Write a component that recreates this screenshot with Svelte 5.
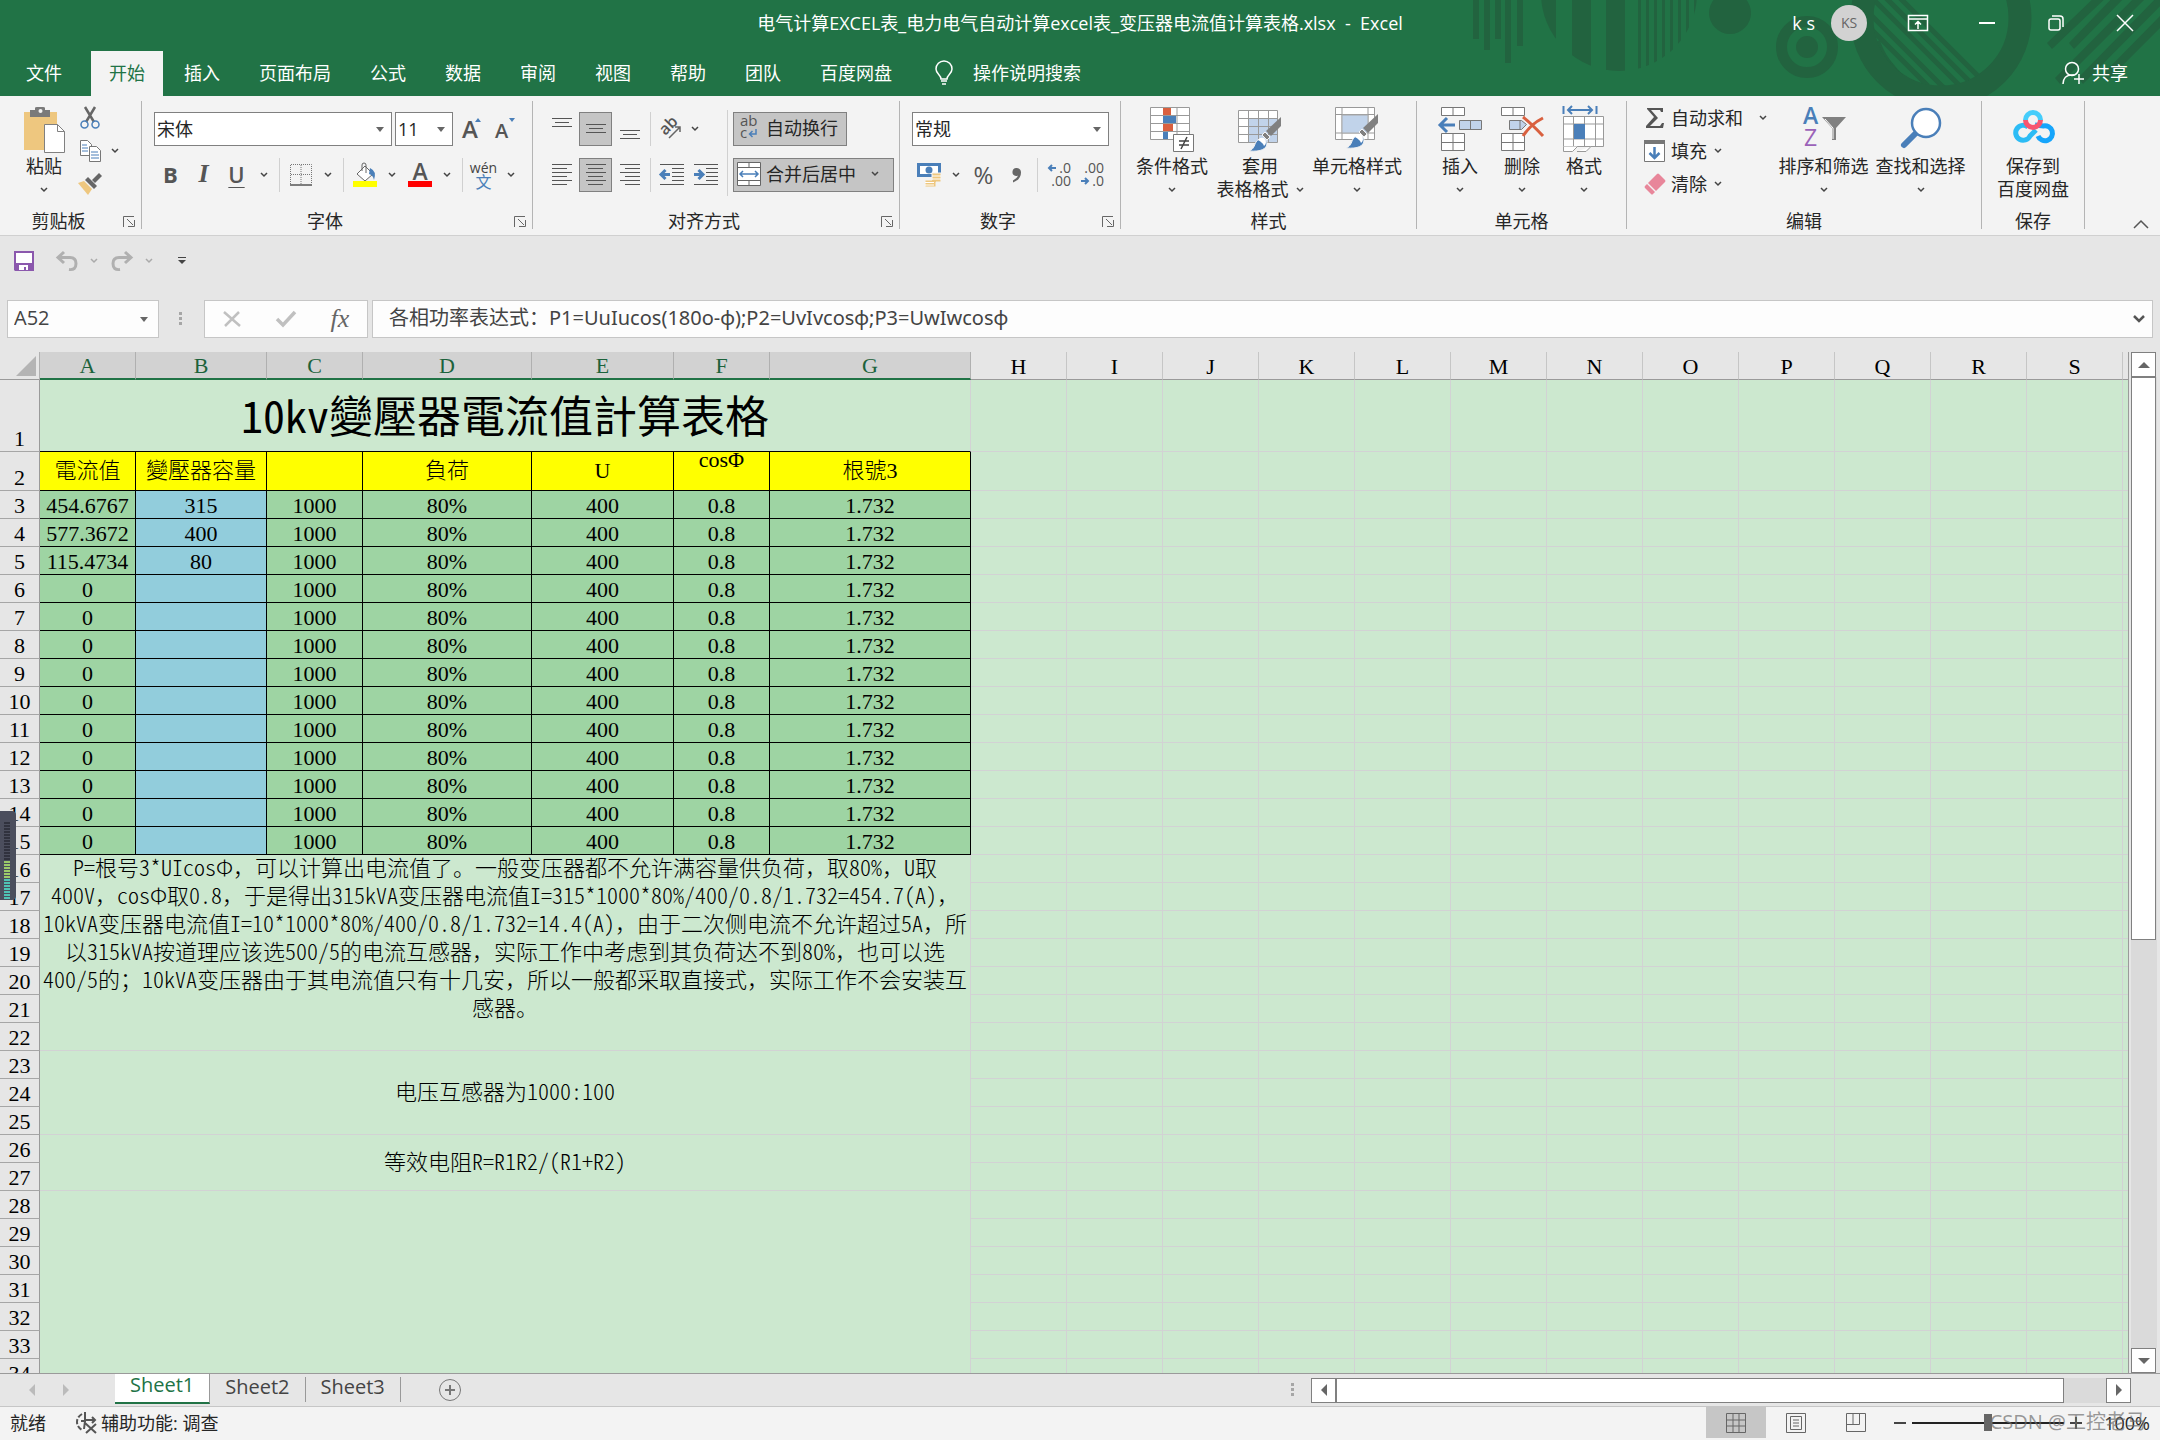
<script lang="ts">
	const tabs = ['插入', '页面布局', '公式', '数据', '审阅', '视图', '帮助', '团队', '百度网盘'];

	const dataColumns = [
		{ letter: 'A', width: 96 },
		{ letter: 'B', width: 131 },
		{ letter: 'C', width: 96 },
		{ letter: 'D', width: 169 },
		{ letter: 'E', width: 142 },
		{ letter: 'F', width: 96 },
		{ letter: 'G', width: 201 }
	];
	const emptyColumns = 'HIJKLMNOPQRST'.split('');

	const headings = ['電流值', '變壓器容量', '', '負荷', 'U', 'cosΦ', '根號3'];
	const results: Record<number, [string, string]> = {
		3: ['454.6767', '315'],
		4: ['577.3672', '400'],
		5: ['115.4734', '80']
	};
	const constants = ['1000', '80%', '400', '0.8', '1.732'];

	const noteLines = [
		'P=根号3*UIcosΦ，可以计算出电流值了。一般变压器都不允许满容量供负荷，取80%，U取',
		'400V，cosΦ取0.8，于是得出315kVA变压器电流值I=315*1000*80%/400/0.8/1.732=454.7(A)，',
		'10kVA变压器电流值I=10*1000*80%/400/0.8/1.732=14.4(A)，由于二次侧电流不允许超过5A，所',
		'以315kVA按道理应该选500/5的电流互感器，实际工作中考虑到其负荷达不到80%，也可以选',
		'400/5的；10kVA变压器由于其电流值只有十几安，所以一般都采取直接式，实际工作不会安装互',
		'感器。'
	];

	const rows = Array.from({ length: 34 }, (_, i) => i + 1);
	const meterBars = Array.from({ length: 26 }, (_, i) => i);

	let formula = $state('各相功率表达式：P1=UuIucos(180o-ф);P2=UvIvcosф;P3=UwIwcosф');
	let cellName = $state('A52');
	let zoom = $state(100);

	function rowCells(row: number) {
		return [...(results[row] ?? ['0', '']), ...constants];
	}

	// Latin runs are set half-width, everything else keeps the full width
	function runs(line: string) {
		return line.split(/([!-~]+)/).filter(Boolean);
	}
</script>

{#snippet chevron()}
	<svg class="chevron" width="8" height="6" viewBox="0 0 8 6"><path d="M1 1l3 3 3-3" /></svg>
{/snippet}

{#snippet triangle()}
	<svg class="triangle" width="8" height="5" viewBox="0 0 8 5"><path d="M0 0h8L4 5z" /></svg>
{/snippet}

{#snippet drop(label: string)}
	<button class="drop" aria-label={label}>{@render chevron()}</button>
{/snippet}

{#snippet launcher(label: string)}
	<button class="launcher" aria-label={label}>
		<svg width="12" height="11" viewBox="0 0 12 11" fill="none" stroke="#666">
			<path d="M.5 11V.5H11M4 3l6 6M5 10.500h6.500V4" />
		</svg>
	</button>
{/snippet}

{#snippet lines(widths: number[], align: string, top: number)}
	<svg width="20" height="22" viewBox="0 0 20 22" fill="#555">
		{#each widths as w, i}
			<rect
				x={align === 'left' ? 0 : align === 'right' ? 20 - w : Math.floor((20 - w) / 2)}
				y={top + i * 4}
				width={w}
				height="1"
			/>
		{/each}
	</svg>
{/snippet}

{#snippet brush()}
	<path d="M43 10v9L33 29l-5-5z" fill="#808080" />
	<path d="M27 25l5 5-3 3-5-5z" fill="#808080" stroke="#f3f3f3" />
	<path d="M11 44c5-2 5-5 7-9 3-5 11-4 11 1 0 6-6 9-18 8z" fill="#4a7fb9" stroke="#f3f3f3" />
	<path d="M20 33c3-4 8-2 8 2 0 2-1 3-2 4-1-3-3-4-6-6z" fill="#fff" />
{/snippet}

{#snippet note(line: string)}
	<p>
		{#each runs(line) as run}<span class:half={/^[!-~]/.test(run)}>{run}</span>{/each}
	</p>
{/snippet}

<div class="window">
	<header class="titlebar">
		<svg class="pattern" width="760" height="96" viewBox="0 0 760 96" fill="#22633f">
			<clipPath id="disc"><circle cx="219" cy="-7" r="78" /></clipPath>
			<clipPath id="ring"><circle cx="541" cy="18" r="68" /></clipPath>
			<path d="M73 0h6v39h-6zM84 0h6v50h-6zM95 0h6v39h-6zM105 0h6v63h-6zM117 0h6v46h-6z" />
			<path
				clip-path="url(#disc)"
				d="M140 0h16v75h-16zM172 0h19v75h-19zM206 0h19v75h-19zM238 0h3v75h-3zM246 0h3v75h-3zM254 0h3v75h-3zM262 0h3v75h-3zM270 0h3v75h-3zM278 0h3v75h-3zM286 0h3v75h-3zM294 0h3v75h-3z"
			/>
			<circle cx="330" cy="13" r="21" />
			<circle cx="407" cy="47" r="25.500" fill="none" stroke="#22633f" stroke-width="11" />
			<circle cx="407" cy="47" r="11" />
			<circle cx="541" cy="18" r="79" fill="none" stroke="#22633f" stroke-width="23" />
			<g clip-path="url(#ring)" stroke="#22633f" stroke-width="5">
				<path d="M456 0l90 90M470 -4l90 90M484 -4l90 90M498 -4l90 90M438 -4l90 90" />
				<path d="M475 42q12 32 40 48" stroke-width="10" />
			</g>
			<path d="M647 43l5 6L712-8h-12zM669 43l5 6L730-8h-12zM655 78l5 6L752-8h-12zM678 78l5 6L774-8h-12zM703 74l5 6 56-56V12z" />
		</svg>
		<div class="title-row">
			<h1>电气计算EXCEL表_电力电气自动计算excel表_变压器电流值计算表格.xlsx&nbsp; -&nbsp; Excel</h1>
			<div class="window-tools">
				<span>k s</span>
				<button class="avatar">KS</button>
				<button aria-label="功能区显示选项">
					<svg width="20" height="16" viewBox="0 0 20 16" fill="none" stroke="#fff">
						<path d="M.5.5h19v15H.5zM.5 4h19M10 14V7M7 9.500l3-3 3 3" stroke-width="1.500" />
					</svg>
				</button>
				<button aria-label="最小化">
					<svg width="16" height="16"><path d="M0 8h16" stroke="#fff" stroke-width="2" /></svg>
				</button>
				<button aria-label="还原">
					<svg width="16" height="16" viewBox="0 0 16 16" fill="none" stroke="#fff" stroke-width="1.500">
						<rect x="1" y="4" width="11" height="11" rx="2" />
						<path d="M4 1h8q3 0 3 3v8" />
					</svg>
				</button>
				<button aria-label="关闭">
					<svg width="16" height="16"><path d="M0 0l16 16M16 0L0 16" stroke="#fff" stroke-width="1.500" /></svg>
				</button>
			</div>
		</div>
		<nav class="tabs">
			<button class="file">文件</button>
			<button class="active">开始</button>
			{#each tabs as tab}
				<button>{tab}</button>
			{/each}
			<button class="tell-me">
				<svg width="18" height="24" viewBox="0 0 18 24" fill="none" stroke="#fff" stroke-width="1.500">
					<path d="M6 18c0-4-5-5-5-10a8 8 0 0 1 16 0c0 5-5 6-5 10zM6 20h6M7 23h4" />
				</svg>
				操作说明搜索
			</button>
			<button class="share">
				<svg width="22" height="24" viewBox="0 0 22 24" fill="none" stroke="#fff" stroke-width="1.500">
					<circle cx="10" cy="8" r="6.500" />
					<path d="M1 23c0-5 3-9 9-9h2M17 13v10M12 18h10" />
				</svg>
				共享
			</button>
		</nav>
	</header>

	<div class="ribbon">
		<section class="group clipboard">
			<div class="body">
				<button class="big paste">
					<svg width="44" height="46" viewBox="0 0 44 46">
						<path d="M2 5h33v38H2z" fill="#eec77f" />
						<path d="M8 3h5V1q0-1 2-1h6q2 0 2 1v2h5v7H8z" fill="#7a7a7a" />
						<circle cx="18.500" cy="4" r="2" fill="#f3f3f3" />
						<path d="M22.500 17.500h13l7 7v21h-20z" fill="#fff" stroke="#808080" />
						<path d="M35.500 17.500v7h7" fill="none" stroke="#808080" />
					</svg>
					<span>粘贴</span>
					<span>{@render chevron()}</span>
				</button>
				<div class="stack">
					<div>
						<button class="tool" aria-label="剪切">
							<svg width="20" height="22" viewBox="0 0 20 22" fill="none" stroke-width="1.500">
								<path d="M5 0l9 15M15 0L6 15" stroke="#666" stroke-width="2.500" />
								<circle cx="4.500" cy="17.500" r="3.500" stroke="#4a7fb9" />
								<circle cx="15.500" cy="17.500" r="3.500" stroke="#4a7fb9" />
							</svg>
						</button>
					</div>
					<div>
						<button class="tool" aria-label="复制">
							<svg width="21" height="22" viewBox="0 0 21 22" fill="#fff" stroke="#777">
								<path d="M.5.5h7l4 4v11H.5z" />
								<path d="M2 5h5M2 8h6M2 11h6" stroke="#4a7fb9" />
								<path d="M9.500 6.500h7l4 4v11h-11z" />
								<path d="M11 12h7M11 15h8M11 18h8" stroke="#4a7fb9" />
							</svg>
						</button>
						{@render drop('复制选项')}
					</div>
					<div>
						<button class="tool" aria-label="格式刷">
							<svg width="24" height="22" viewBox="0 0 24 22">
								<path d="M0 10l6-2 8 8-4 6z" fill="#eec77f" />
								<path d="M7 7l3-3 9 9-3 3z" fill="#666" />
								<path d="M14 7l7-7 3 3-7 7z" fill="#666" />
							</svg>
						</button>
					</div>
				</div>
			</div>
			<footer><h2>剪贴板</h2>{@render launcher('剪贴板设置')}</footer>
		</section>

		<section class="group font">
			<div class="body rows">
				<div class="row">
					<label class="combo family">
						<select aria-label="字体"><option>宋体</option></select>{@render triangle()}
					</label>
					<label class="combo size">
						<select aria-label="字号"><option>11</option></select>{@render triangle()}
					</label>
					<button class="tool" aria-label="增大字号">
						<svg width="22" height="24" viewBox="0 0 22 24">
							<text x="0" y="21" font-size="24" class="glyph">A</text><path d="M13 5h6l-3-4z" fill="#4a7fb9" />
						</svg>
					</button>
					<button class="tool" aria-label="减小字号">
						<svg width="22" height="24" viewBox="0 0 22 24">
							<text x="0" y="21" font-size="20" class="glyph">A</text><path d="M14 1h6l-3 4z" fill="#4a7fb9" />
						</svg>
					</button>
				</div>
				<div class="row">
					<button class="tool letter"><b>B</b></button>
					<button class="tool letter"><i>I</i></button>
					<button class="tool letter"><u>U</u></button>
					{@render drop('下划线选项')}
					<span class="sep"></span>
					<button class="tool" aria-label="边框">
						<svg width="22" height="22" viewBox="0 0 22 22" fill="none" stroke="#777">
							<path d="M.5 20V.5h21V20M11 1v19M1 10.500h20" stroke-dasharray="1 1" />
							<path d="M0 21h22" stroke="#555" stroke-width="1.500" />
						</svg>
					</button>
					{@render drop('边框选项')}
					<span class="sep"></span>
					<button class="tool" aria-label="填充颜色">
						<svg width="24" height="26" viewBox="0 0 24 26">
							<path d="M4 12l8-8 8 8-8 7z" fill="#fff" stroke="#666" />
							<path d="M9 9V3q0-2 2-2t2 2v8" fill="none" stroke="#666" />
							<path d="M17 6q7 3 4 12-1-5-5-6z" fill="#4a7fb9" />
							<path d="M0 19h24v6H0z" fill="#ff0" />
						</svg>
					</button>
					{@render drop('填充颜色选项')}
					<button class="tool" aria-label="字体颜色">
						<svg width="24" height="26" viewBox="0 0 24 26">
							<text x="12" y="18" font-size="23" text-anchor="middle" class="glyph">A</text>
							<path d="M0 19h24v6H0z" fill="#f00" />
						</svg>
					</button>
					{@render drop('字体颜色选项')}
					<span class="sep"></span>
					<button class="tool pinyin"><span>wén</span><span>文</span></button>
					{@render drop('拼音选项')}
				</div>
			</div>
			<footer><h2>字体</h2>{@render launcher('字体设置')}</footer>
		</section>

		<section class="group align">
			<div class="body">
				<div class="rows spaced">
					<div class="row">
						<button class="tool" aria-label="顶端对齐">{@render lines([20, 14, 20], 'center', 0)}</button>
						<button class="tool on" aria-label="垂直居中">{@render lines([20, 14, 20], 'center', 6)}</button>
						<button class="tool" aria-label="底端对齐">{@render lines([20, 14, 20], 'center', 12)}</button>
						<span class="sep"></span>
						<button class="tool" aria-label="方向">
							<svg width="24" height="24" viewBox="0 0 24 24">
								<text x="2" y="17" font-size="16" class="glyph" transform="rotate(-45 6 14)">ab</text>
								<path d="M9 21L20 10M20 15v-5h-5" fill="none" stroke="#666" stroke-width="1.500" />
							</svg>
						</button>
						<button class="drop tight" aria-label="方向选项">{@render chevron()}</button>
					</div>
					<div class="row">
						<button class="tool" aria-label="左对齐">{@render lines([20, 15, 20, 15, 20, 15], 'left', 0)}</button>
						<button class="tool on" aria-label="居中">{@render lines([20, 15, 20, 15, 20, 15], 'center', 0)}</button>
						<button class="tool" aria-label="右对齐">{@render lines([20, 15, 20, 15, 20, 15], 'right', 0)}</button>
						<span class="sep"></span>
						<button class="tool" aria-label="减少缩进量">
							<svg width="24" height="22" viewBox="0 0 24 22">
								<path d="M0 .5h24M12 4.500h12M12 8.500h12M12 12.500h12M12 16.500h12M0 20.500h24" stroke="#555" />
								<path d="M10 10.500H2M5.500 6L1 10.500 5.500 15" fill="none" stroke="#4a7fb9" stroke-width="3" />
							</svg>
						</button>
						<button class="tool" aria-label="增加缩进量">
							<svg width="24" height="22" viewBox="0 0 24 22">
								<path d="M0 .5h24M12 4.500h12M12 8.500h12M12 12.500h12M12 16.500h12M0 20.500h24" stroke="#555" />
								<path d="M0 10.500h8M4.500 6L9 10.500 4.500 15" fill="none" stroke="#4a7fb9" stroke-width="3" />
							</svg>
						</button>
					</div>
				</div>
				<span class="sep tall"></span>
				<div class="rows">
					<button class="wide on">
						<svg width="24" height="24" viewBox="0 0 24 24">
							<text x="3" y="10" font-size="15" class="glyph thin">ab</text>
							<text x="3" y="22" font-size="15" class="glyph thin">c</text>
							<path d="M19 13v5h-6M15.500 15l-3 3 3 3" fill="none" stroke="#4a7fb9" stroke-width="1.500" />
						</svg>
						自动换行
					</button>
					<button class="wide on">
						<svg width="24" height="24" viewBox="0 0 24 24">
							<path d="M.5.5h23v23H.5zM.5 5.500h23M.5 18.500h23M12 0v5M12 19v5" fill="#fff" stroke="#666" />
							<path d="M3 12h18M6 9l-3 3 3 3M18 9l3 3-3 3" fill="none" stroke="#4a7fb9" stroke-width="1.500" />
						</svg>
						合并后居中
						<span class="inline-drop">{@render chevron()}</span>
					</button>
				</div>
			</div>
			<footer><h2>对齐方式</h2>{@render launcher('对齐设置')}</footer>
		</section>

		<section class="group number">
			<div class="body rows">
				<label class="combo format">
					<select aria-label="数字格式"><option>常规</option></select>{@render triangle()}
				</label>
				<div class="row">
					<button class="tool" aria-label="会计数字格式">
						<svg width="24" height="24" viewBox="0 0 24 24">
							<path d="M0 0h24v14H0z" fill="#4a7fb9" />
							<path d="M3 3h18v8H3z" fill="#fff" />
							<circle cx="12" cy="7" r="3.500" fill="#4a7fb9" />
							<path d="M15 10h9v9h-5v5H8v-7h7z" fill="#eec77f" stroke="#f3f3f3" />
							<path d="M15 13h9M15 16h9M8 19.500h9M8 22h9" stroke="#fff" />
						</svg>
					</button>
					{@render drop('会计格式选项')}
					<button class="tool symbol">%</button>
					<button class="tool" aria-label="千位分隔">
						<svg width="10" height="16" viewBox="0 0 10 16" fill="#666"><path d="M5 1a4 4 0 0 0-1 8q1 0 2-.5-1 3-5 5v2q8-3 8-10 0-4-4-4.500z" /></svg>
					</button>
					<span class="sep"></span>
					<button class="tool" aria-label="增加小数位数">
						<svg width="24" height="26" viewBox="0 0 24 26">
							<text x="24" y="11" font-size="14" text-anchor="end" class="glyph thin">.0</text>
							<text x="24" y="24" font-size="14" text-anchor="end" class="glyph thin">.00</text>
							<path d="M9 6H2M5 3L2 6l3 3" fill="none" stroke="#4a7fb9" stroke-width="2" />
						</svg>
					</button>
					<button class="tool" aria-label="减少小数位数">
						<svg width="24" height="26" viewBox="0 0 24 26">
							<text x="24" y="11" font-size="14" text-anchor="end" class="glyph thin">.00</text>
							<text x="24" y="24" font-size="14" text-anchor="end" class="glyph thin">.0</text>
							<path d="M1 19h7M5 16l3 3-3 3" fill="none" stroke="#4a7fb9" stroke-width="2" />
						</svg>
					</button>
				</div>
			</div>
			<footer><h2>数字</h2>{@render launcher('数字设置')}</footer>
		</section>

		<section class="group styles">
			<div class="body">
				<button class="big medium">
					<svg width="44" height="46" viewBox="0 0 44 46">
						<path d="M.5.5h39v32H.5zM13.500 1v32M27 1v32M0 8.500h40M0 16.500h40M0 24.500h40" fill="#fff" stroke="#999" />
						<path d="M13 1h8v7h-8zM13 17h10v7H13z" fill="#d9603f" />
						<path d="M13 9h13v7H13zM13 25h5v7h-5z" fill="#4a7fb9" />
						<path d="M23.500 27.500h20v17h-20z" fill="#fff" stroke="#777" />
						<path d="M29 34h10M29 38h10M37 30l-6 12" fill="none" stroke="#444" stroke-width="1.500" />
					</svg>
					<span>条件格式</span>
					<span>{@render chevron()}</span>
				</button>
				<button class="big medium">
					<svg width="44" height="46" viewBox="0 0 44 46">
						<path d="M.5 3.500h39v32H.5z" fill="#fff" />
						<path d="M10 12h30v23H10z" fill="#c1d3ea" />
						<path d="M.5 3.500h39v32H.5zM10.500 4v31M20.500 4v31M30.500 4v31M0 11.500h40M0 19.500h40M0 27.500h40" fill="none" stroke="#999" />
						{@render brush()}
					</svg>
					<span>套用</span>
					<span>表格格式 {@render chevron()}</span>
				</button>
				<button class="big large">
					<svg width="44" height="46" viewBox="0 0 44 46">
						<path d="M.5.5h39v32H.5zM7 1v32M33 1v32M0 7.500h40M0 26h40" fill="#fff" stroke="#999" />
						<path d="M7 8h26v18H7z" fill="#c1d3ea" stroke="#aaa" />
						<g transform="translate(0 -3)">{@render brush()}</g>
					</svg>
					<span>单元格样式</span>
					<span>{@render chevron()}</span>
				</button>
			</div>
			<footer><h2>样式</h2></footer>
		</section>

		<section class="group cells">
			<div class="body">
				<button class="big small">
					<svg width="44" height="46" viewBox="0 0 44 46" fill="#fff" stroke="#777">
						<path d="M3.500.5h23v8h-23zM15 1v8M3.500 26.500h23v17h-23zM15 27v17M4 35.500h22" />
						<path d="M21.500 13.500h22v9h-22zM32.500 14v9" fill="#c1d3ea" />
						<path d="M17 18H2M9 11l-7 7 7 7" fill="none" stroke="#4a7fb9" stroke-width="3" />
					</svg>
					<span>插入</span>
					<span>{@render chevron()}</span>
				</button>
				<button class="big small">
					<svg width="44" height="46" viewBox="0 0 44 46" fill="#fff" stroke="#777">
						<path d="M1.500.5h23v8h-23zM13 1v8M1.500 26.500h23v17h-23zM13 27v17M2 35.500h22" />
						<path d="M9.500 13.500h12l5 4-5 5h-12zM20 14v9" fill="#c1d3ea" />
						<path d="M23 10q9 7 20 19M43 11Q31 17 23 29" fill="none" stroke="#d9603f" stroke-width="3" />
					</svg>
					<span>删除</span>
					<span>{@render chevron()}</span>
				</button>
				<button class="big small">
					<svg width="44" height="46" viewBox="0 0 44 46" fill="#fff" stroke="#999">
						<path d="M1.500 9.500h40v30h-40zM11.500 10v29M22.500 10v29M33.500 10v29M2 17h39M2 32h39" />
						<path d="M12 17h11v15H12z" fill="#4a7fb9" stroke="none" />
						<path d="M1.500 39.500v5h9l5-5M15 44.500h9l5-5" />
						<path d="M1.500-1v8M34.500-1v8M6 3h24M10-1L6 3l4 4M26-1l4 4-4 4" fill="none" stroke="#4a7fb9" stroke-width="2" />
					</svg>
					<span>格式</span>
					<span>{@render chevron()}</span>
				</button>
			</div>
			<footer><h2>单元格</h2></footer>
		</section>

		<section class="group editing">
			<div class="body">
				<div class="stack commands">
					<button>
						<svg width="24" height="22" viewBox="0 0 24 22"><path d="M4 1h16v4h-2l-1-2H8l7 8-8 8h10l2-3h2l-1 5H3v-2l8-9-7-8z" fill="#555" /></svg>
						自动求和<span class="far">{@render chevron()}</span>
					</button>
					<button>
						<svg width="24" height="24" viewBox="0 0 24 24">
							<path d="M1.500 1.500h20v21h-20z" fill="#fff" stroke="#777" /><path d="M1 1h21v4H1z" fill="#777" />
							<path d="M11.500 8v11M6.500 14l5 5 5-5" fill="none" stroke="#4a7fb9" stroke-width="2.500" />
						</svg>
						填充<span>{@render chevron()}</span>
					</button>
					<button>
						<svg width="24" height="24" viewBox="0 0 24 24" fill="#e8869a">
							<path d="M14 2q1-1 2 0l6 6q1 1 0 2l-9 9-8-8z" /><path d="M4 12l8 8-2 2q-1 1-2 0l-6-6q-1-1 0-2z" />
						</svg>
						清除<span>{@render chevron()}</span>
					</button>
				</div>
				<button class="big query">
					<svg width="44" height="46" viewBox="0 0 44 46">
						<text x="1" y="17" font-size="23" class="glyph blue">A</text>
						<text x="2" y="39" font-size="23" class="glyph thin purple">Z</text>
						<path d="M20 10h24L34 21v12h-4V21z" fill="#808080" /><path d="M23 12l8 9v11" fill="none" stroke="#fff" />
					</svg>
					<span>排序和筛选</span>
					<span>{@render chevron()}</span>
				</button>
				<button class="big query">
					<svg width="44" height="46" viewBox="0 0 44 46">
						<path d="M16 27L5 38" stroke="#4a7fb9" stroke-width="6" stroke-linecap="round" />
						<circle cx="27" cy="16" r="14" fill="#fff" stroke="#4a7fb9" stroke-width="2.500" />
					</svg>
					<span>查找和选择</span>
					<span>{@render chevron()}</span>
				</button>
			</div>
			<footer><h2>编辑</h2></footer>
		</section>

		<section class="group save">
			<div class="body">
				<button class="big">
					<svg width="44" height="46" viewBox="0 0 44 46" fill="none" stroke-width="5">
						<path d="M25 23l-6 6a7.500 7.500 0 1 1-2-9" stroke="#2cbcf5" />
						<path d="M24 18l8 1a7.500 7.500 0 1 1-5 10" stroke="#16a5fb" />
						<path d="M14.500 13a7.500 7.500 0 0 1 15 0" stroke="#45cdfb" />
						<path d="M14.500 13a7.500 7.500 0 0 0 15 0" stroke="#f8566f" />
					</svg>
					<span>保存到</span>
					<span>百度网盘</span>
				</button>
			</div>
			<footer><h2>保存</h2></footer>
		</section>
		<button class="collapse" aria-label="折叠功能区">
			<svg width="16" height="10" viewBox="0 0 16 10"><path d="M1 9l7-7 7 7" fill="none" stroke="#555" stroke-width="1.500" /></svg>
		</button>
	</div>

	<div class="quick-access">
		<button class="tool" aria-label="保存">
			<svg width="20" height="20" viewBox="0 0 20 20"><path d="M0 0h20v20H1l-1-1z" fill="#8b58ad" /><path d="M2 2h16v10H2zM5 14h9v5h-2v-3h-2v3H5z" fill="#fff" /></svg>
		</button>
		<button class="tool" aria-label="撤消">
			<svg width="22" height="20" viewBox="0 0 22 20" fill="none" stroke="#b0b0b0" stroke-width="3"><path d="M8 1L2 6.500 8 12M3 6.500h11q6 0 6 6 0 7-7 6" /></svg>
		</button>
		{@render drop('撤消列表')}
		<button class="tool" aria-label="恢复">
			<svg width="22" height="20" viewBox="0 0 22 20" fill="none" stroke="#b0b0b0" stroke-width="3"><path d="M14 1l6 5.500L14 12M19 6.500H8q-6 0-6 6 0 7 7 6" /></svg>
		</button>
		{@render drop('恢复列表')}
		<button class="tool" aria-label="自定义快速访问工具栏">
			<svg width="8" height="8" viewBox="0 0 8 8" fill="#444"><path d="M0 0h8v1H0zM0 3h8L4 7z" /></svg>
		</button>
	</div>

	<div class="formula-bar">
		<div class="name-box">
			<input aria-label="名称框" bind:value={cellName} />
			<button aria-label="名称列表">{@render triangle()}</button>
		</div>
		<svg class="grip" width="4" height="14" fill="#a6a6a6"><path d="M0 0h3v3H0zM0 5h3v3H0zM0 10h3v3H0z" /></svg>
		<div class="entry-tools">
			<button aria-label="取消"><svg width="18" height="16" viewBox="0 0 18 16"><path d="M1 1l16 14M16 1L2 15" stroke="#c0c0c0" stroke-width="2.500" /></svg></button>
			<button aria-label="输入"><svg width="20" height="16" viewBox="0 0 20 16"><path d="M1 8l6 6L19 1" fill="none" stroke="#c0c0c0" stroke-width="3.500" /></svg></button>
			<button class="fx">fx</button>
		</div>
		<div class="formula">
			<input aria-label="编辑栏" bind:value={formula} />
			<button aria-label="展开编辑栏"><svg width="12" height="8" viewBox="0 0 12 8"><path d="M1 1l5 5 5-5" fill="none" stroke="#555" stroke-width="2.500" /></svg></button>
		</div>
	</div>

	<main>
		<div class="sheet">
			<table>
				<colgroup>
					<col style:width="40px" />
					{#each dataColumns as column}
						<col style:width="{column.width}px" />
					{/each}
					{#each emptyColumns as _}
						<col style:width="96px" />
					{/each}
				</colgroup>
				<thead>
					<tr>
						<th class="corner"><svg width="20" height="20"><path d="M20 0v20H0z" fill="#b4b4b4" /></svg></th>
						{#each dataColumns as column}
							<th class="selected">{column.letter}</th>
						{/each}
						{#each emptyColumns as letter}
							<th>{letter}</th>
						{/each}
					</tr>
				</thead>
				<tbody>
					{#each rows as row}
						<tr class:first={row === 1} class:second={row === 2}>
							<th>{row}</th>
							{#if row === 1}
								<td class="sheet-title" colspan="7">10kv變壓器電流值計算表格</td>
							{:else if row === 2}
								{#each headings as heading}
									<td class="heading" class:raised={heading === 'cosΦ'}>{heading}</td>
								{/each}
							{:else if row <= 15}
								{#each rowCells(row) as value, i}
									<td class="value" class:input-cell={i === 1}>{value}</td>
								{/each}
							{:else if row === 16}
								<td class="note" colspan="7" rowspan="7">
									{#each noteLines as line}{@render note(line)}{/each}
								</td>
							{:else if row === 23}
								<td class="note middle" colspan="7" rowspan="3">{@render note('电压互感器为1000:100')}</td>
							{:else if row === 26}
								<td class="note middle" colspan="7" rowspan="2">{@render note('等效电阻R=R1R2/(R1+R2)')}</td>
							{:else if row === 28}
								<td colspan="7" rowspan="7"></td>
							{/if}
							{#each emptyColumns as _}<td></td>{/each}
						</tr>
					{/each}
				</tbody>
			</table>
		</div>
		<div class="v-scroll">
			<button aria-label="向上滚动"><svg width="12" height="6"><path d="M6 0l6 6H0z" fill="#666" /></svg></button>
			<div class="track"><div class="thumb"></div></div>
			<button aria-label="向下滚动"><svg width="12" height="6"><path d="M0 0h12L6 6z" fill="#666" /></svg></button>
		</div>
	</main>

	<div class="sheet-bar">
		<button class="nav" aria-label="上一张"><svg width="6" height="12"><path d="M6 0v12L0 6z" fill="#bbb" /></svg></button>
		<button class="nav" aria-label="下一张"><svg width="6" height="12"><path d="M0 0v12l6-6z" fill="#bbb" /></svg></button>
		<div class="sheets">
			<button class="current">Sheet1</button>
			<button>Sheet2</button>
			<button>Sheet3</button>
		</div>
		<button class="add" aria-label="新工作表">
			<svg width="24" height="24" fill="none" stroke="#777"><circle cx="12" cy="12" r="10.500" /><path d="M7 12h10M12 7v10" stroke-width="2" /></svg>
		</button>
		<svg class="grip" width="4" height="14" fill="#a6a6a6"><path d="M0 0h3v3H0zM0 5h3v3H0zM0 10h3v3H0z" /></svg>
		<div class="h-scroll">
			<button aria-label="向左滚动"><svg width="6" height="12"><path d="M6 0v12L0 6z" fill="#666" /></svg></button>
			<div class="track"><div class="thumb"></div></div>
			<button aria-label="向右滚动"><svg width="6" height="12"><path d="M0 0v12l6-6z" fill="#666" /></svg></button>
		</div>
	</div>

	<div class="status">
		<span>就绪</span>
		<button class="access">
			<svg width="22" height="22" viewBox="0 0 22 22" fill="none" stroke="#555" stroke-width="2">
				<path d="M6 2Q1 5 1 10t5 8" stroke-dasharray="5 2" /><path d="M9 0v9H5M9 8h10M16 5l3 3-3 3M9 9l-1 8M9 11l11 10M20 12L10 21" />
			</svg>
			辅助功能: 调查
		</button>
		<div class="views">
			<button class="chosen" aria-label="普通"><svg width="20" height="20" fill="none" stroke="#666"><path d="M.5.5h19v19H.5zM.5 7h19M.5 13h19M7 0v20M13 0v20" /></svg></button>
			<button aria-label="页面布局"><svg width="20" height="20" fill="none" stroke="#666"><path d="M.5.5h19v19H.5zM4.500 3.500h11v13h-11zM7 7h6M7 10h6M7 13h6" /></svg></button>
			<button aria-label="分页预览"><svg width="20" height="20" fill="none" stroke="#666"><path d="M.5.5h19v18H.5zM.5 11.500h13V.5M7 0v11" /></svg></button>
		</div>
		<div class="zoom">
			<button aria-label="缩小"><svg width="12" height="12"><path d="M0 6h12" stroke="#444" stroke-width="2" /></svg></button>
			<input type="range" min="10" max="190" aria-label="显示比例" bind:value={zoom} />
			<button aria-label="放大"><svg width="12" height="12"><path d="M0 6h12M6 0v12" stroke="#444" stroke-width="2" /></svg></button>
			<span class="percent">{zoom}%</span>
		</div>
		<span class="watermark">CSDN @工控老马</span>
	</div>

	<svg class="meter" width="16" height="90" viewBox="0 0 16 90">
		<path d="M0 0h12q4 0 4 4v81q0 4-4 4H0z" fill="#4b4e5d" />
		{#each meterBars as i}
			<rect x="4" y={11 + i * 3} width="6" height="2" fill={i < 13 ? '#30323e' : i < 19 ? '#9ccb6a' : '#4fc3b4'} />
		{/each}
	</svg>
</div>

<style>
	:global(body) {
		margin: 0;
	}
	.window {
		position: relative;
		display: flex;
		flex-direction: column;
		height: 100vh;
		overflow: hidden;
		background: #e6e6e6;
		color: #262626;
		font: 18px/24px 'Open Sans', 'Noto Sans CJK SC', sans-serif;
	}
	.window * {
		box-sizing: border-box;
	}
	button,
	select,
	input {
		margin: 0;
		padding: 0;
		border: 0;
		background: none;
		color: inherit;
		font: inherit;
	}
	button {
		display: flex;
		align-items: center;
		justify-content: center;
		flex: none;
		white-space: nowrap;
	}
	h1,
	h2,
	p {
		margin: 0;
		font-size: inherit;
		font-weight: 400;
	}
	svg {
		display: block;
		flex: none;
		overflow: visible;
	}
	.glyph {
		fill: #555;
		font-family: 'Open Sans', sans-serif;
		font-weight: 600;
	}
	.glyph.thin {
		font-weight: 400;
	}
	.glyph.blue {
		fill: #4a7fb9;
	}
	.glyph.purple {
		fill: #9b62b8;
	}

	/* title bar */
	.titlebar {
		position: relative;
		flex: none;
		background: #217346;
		color: #fff;
	}
	.pattern {
		position: absolute;
		top: 0;
		right: 0;
		overflow: hidden;
	}
	.title-row {
		position: relative;
		display: grid;
		grid-template-columns: 1fr auto 1fr;
		align-items: center;
		height: 51px;
		padding-bottom: 5px;
	}
	.title-row h1 {
		grid-column: 2;
	}
	.window-tools {
		display: flex;
		align-items: center;
		justify-content: flex-end;
		padding-right: 1px;
		word-spacing: normal;
	}
	.window-tools button {
		width: 69px;
	}
	.window-tools .avatar {
		width: 36px;
		height: 36px;
		margin: 0 16px;
		border-radius: 50%;
		background: #d2d2d2;
		color: #666;
		font-size: 14px;
	}
	.tabs {
		position: relative;
		display: flex;
		gap: 3px;
		height: 45px;
	}
	.tabs button {
		padding: 0 18px 2px;
	}
	.tabs .file {
		width: 88px;
	}
	.tabs .active {
		background: #f3f3f3;
		color: #217346;
	}
	.tabs .tell-me {
		gap: 20px;
		margin-left: 4px;
	}
	.tabs .share {
		gap: 8px;
		margin-left: auto;
		padding-right: 32px;
	}

	/* ribbon */
	.ribbon {
		display: flex;
		flex: none;
		height: 140px;
		padding: 5px 0 6px;
		border-bottom: 1px solid #d0d0d0;
		background: #f3f3f3;
	}
	.group {
		display: flex;
		flex-direction: column;
		flex: none;
		border-right: 1px solid #b4b4b4;
	}
	.clipboard {
		width: 142px;
	}
	.font {
		width: 391px;
	}
	.align {
		width: 367px;
	}
	.number {
		width: 221px;
	}
	.styles {
		width: 296px;
	}
	.cells {
		width: 210px;
	}
	.editing {
		width: 355px;
	}
	.save {
		width: 103px;
	}
	.group .body {
		display: flex;
		flex: none;
		height: 110px;
		padding: 0 12px;
	}
	.styles .body {
		padding: 0 7px;
	}
	.save .body {
		padding: 0;
	}
	.group footer {
		display: flex;
		align-items: center;
		height: 20px;
	}
	.group h2 {
		flex: 1;
		text-align: center;
	}
	.launcher {
		width: 24px;
	}
	.group .body.rows,
	.body .rows {
		display: flex;
		flex-direction: column;
		gap: 12px;
		padding-top: 11px;
	}
	.row {
		display: flex;
		height: 34px;
	}
	.spaced .row {
		gap: 1px;
	}
	.tool {
		width: 33px;
	}
	.drop {
		width: 22px;
	}
	.drop.tight {
		width: 12px;
	}
	.chevron path {
		fill: none;
		stroke: #444;
		stroke-width: 1.5;
	}
	.triangle path {
		fill: #666;
	}
	.sep {
		flex: none;
		width: 1px;
		margin: 0 4px;
		background: #d0d0d0;
	}
	.spaced .sep {
		margin: 0 3px;
	}
	.sep.tall {
		height: 86px;
		margin: 9px 5px 0;
	}
	.on {
		border: 1px solid #808080;
		background: #c5c5c5;
	}
	.wide {
		align-self: flex-start;
		gap: 5px;
		height: 34px;
		padding: 0 8px 2px 3px;
	}
	.inline-drop {
		width: 24px;
		padding-left: 10px;
	}
	.combo {
		position: relative;
		flex: none;
		height: 34px;
		margin-right: 3px;
		border: 1px solid #808080;
		background: #fff;
	}
	.combo select {
		width: 100%;
		height: 32px;
		padding-left: 2px;
		appearance: none;
	}
	.combo .triangle {
		position: absolute;
		top: 14px;
		right: 7px;
	}
	.family {
		width: 238px;
	}
	.size {
		width: 58px;
	}
	.format {
		width: 197px;
	}
	.letter {
		padding-bottom: 2px;
		color: #555;
		font-size: 22px;
	}
	.letter i {
		font-family: 'Liberation Serif', serif;
		font-size: 26px;
		font-weight: 700;
	}
	.letter u {
		font-weight: 600;
		text-underline-offset: 4px;
		text-decoration-thickness: 1px;
	}
	.pinyin {
		flex-direction: column;
		color: #444;
		font-size: 14px;
		line-height: 14px;
	}
	.pinyin span + span {
		color: #4a7fb9;
		font-size: 16px;
	}
	.symbol {
		color: #555;
		font-size: 24px;
	}
	.big {
		flex-direction: column;
		justify-content: flex-start;
		width: 64px;
		padding-top: 6px;
		line-height: 23px;
	}
	.big > svg {
		margin-bottom: 2px;
	}
	.big span {
		display: flex;
		align-items: center;
		gap: 7px;
		height: 23px;
	}
	.big.small {
		width: 62px;
	}
	.big.medium {
		width: 88px;
	}
	.big.large {
		width: 106px;
	}
	.big.query {
		width: 97px;
	}
	.save .big {
		width: 102px;
	}
	.stack > * {
		display: flex;
		justify-content: flex-start;
		height: 33px;
	}
	.stack .tool {
		width: 28px;
	}
	.commands {
		width: 136px;
		padding-left: 4px;
	}
	.commands svg:not(.chevron) {
		margin-right: 4px;
	}
	.commands span {
		padding-left: 7px;
	}
	.commands .far {
		padding-left: 16px;
	}
	.editing .body {
		padding-right: 0;
	}
	.collapse {
		align-self: flex-end;
		width: 16px;
		height: 10px;
		margin: 0 11px 0 auto;
	}

	/* quick access and formula bar */
	.quick-access {
		display: flex;
		flex: none;
		height: 50px;
		padding-left: 7px;
	}
	.quick-access .tool:nth-child(2) {
		margin-left: 10px;
	}
	.quick-access .tool:last-child {
		margin-left: 5px;
	}
	.quick-access .drop :global(path) {
		stroke: #aaa;
	}
	.formula-bar {
		display: flex;
		flex: none;
		align-items: center;
		padding: 14px 7px;
		color: #444;
	}
	.name-box,
	.entry-tools,
	.formula {
		display: flex;
		height: 38px;
		border: 1px solid #c6c6c6;
		background: #fdfdfd;
	}
	.name-box {
		width: 152px;
	}
	.name-box input,
	.formula input {
		flex: 1;
		min-width: 0;
		padding: 0 0 2px 6px;
		font-size: 20px;
	}
	.name-box button {
		width: 28px;
	}
	.formula-bar .grip {
		margin: 0 21px 0 20px;
	}
	.entry-tools {
		width: 164px;
	}
	.entry-tools button {
		flex: 1;
	}
	.fx {
		color: #666;
		font: italic 26px/26px 'Liberation Serif', serif;
	}
	.formula {
		flex: 1;
		margin-left: 4px;
	}
	.formula input {
		padding-left: 16px;
		font-family: 'Noto Sans', 'Noto Sans CJK SC', sans-serif;
	}
	.formula button {
		width: 26px;
	}

	/* sheet */
	main {
		display: flex;
		flex: 1;
		min-height: 0;
	}
	.sheet {
		flex: 1;
		min-width: 0;
		overflow: hidden;
		border-right: 1px solid #9a9a9a;
		background: #cce8cf;
	}
	table {
		width: 2219px;
		border-spacing: 0;
		table-layout: fixed;
		color: #000;
		font: 22px/24px 'Liberation Serif', 'Noto Sans CJK SC', serif;
	}
	td,
	table th {
		height: 28px;
		padding: 0;
		border-right: 1px solid #d2d2d4;
		border-bottom: 1px solid #d2d2d4;
		font-weight: 400;
		text-align: center;
		vertical-align: bottom;
		white-space: nowrap;
	}
	thead th {
		border-color: #9a9a9a;
		border-right-color: #c6c6c6;
		background: #e6e6e6;
	}
	thead .selected {
		border-right-color: #b0b0b0;
		border-bottom: 2px solid #217346;
		background: #d2d2d2;
		color: #1c623b;
	}
	thead .corner {
		border-right-color: #b0b0b0;
	}
	.corner svg {
		margin: 0 3px 3px auto;
	}
	tbody th {
		border-color: #a6a6a6;
		border-right-color: #9a9a9a;
		background: #e6e6e6;
	}
	.first > * {
		height: 72px;
	}
	.second > * {
		height: 39px;
	}
	.first .sheet-title {
		padding-bottom: 3px;
		border-bottom-color: #000;
		font: 44px/60px 'Noto Sans CJK TC', sans-serif;
		font-feature-settings: 'hwid';
		vertical-align: middle;
	}
	.heading,
	.value {
		border-color: #000;
	}
	.heading {
		background: #ff0;
		font-weight: 300;
		vertical-align: middle;
	}
	.heading.raised {
		line-height: 16px;
		vertical-align: top;
	}
	.value {
		background: #9ed4a3;
	}
	.input-cell {
		background: #92cddc;
	}
	.note {
		font-family: 'Noto Sans CJK SC', sans-serif;
		line-height: 28px;
		vertical-align: top;
	}
	.note p {
		font-weight: 300;
	}
	.note p:first-child {
		margin-top: -3px;
	}
	.note.middle {
		padding-bottom: 3px;
		vertical-align: middle;
	}
	.half {
		font-feature-settings: 'hwid';
	}
	.v-scroll {
		display: flex;
		flex-direction: column;
		width: 26px;
		margin: 0 3px 0 2px;
	}
	.v-scroll button,
	.h-scroll button {
		width: 25px;
		height: 25px;
		border: 1px solid #808080;
		background: #fff;
	}
	.track {
		flex: 1;
		background: #dadada;
	}
	.thumb {
		width: 25px;
		height: 58%;
		border: 1px solid #808080;
		background: #fff;
	}

	/* sheet tabs */
	.sheet-bar {
		display: flex;
		flex: none;
		align-items: center;
		height: 33px;
		padding-right: 29px;
		border-top: 1px solid #9a9a9a;
	}
	.nav {
		width: 34px;
	}
	.nav:first-child {
		margin-left: 15px;
	}
	.sheets {
		display: flex;
		align-self: flex-start;
		margin-left: 32px;
		color: #444;
		font-size: 20px;
	}
	.sheets button {
		height: 25px;
		margin-top: 3px;
		padding: 0 15px 6px;
		border-right: 1px solid #999;
	}
	.sheets .current {
		height: 30px;
		margin: 0;
		border-bottom: 2px solid #217346;
		background: #fff;
		color: #217346;
	}
	.add {
		margin: 0 auto 0 37px;
	}
	.h-scroll {
		display: flex;
		width: 820px;
		margin-left: 16px;
	}
	.h-scroll .thumb {
		width: 94.5%;
		height: 25px;
	}

	/* status bar */
	.status {
		position: relative;
		display: flex;
		flex: none;
		align-items: center;
		height: 34px;
		padding: 0 10px 2px;
		border-top: 1px solid #c6c6c6;
		background: #f3f3f3;
	}
	.access {
		gap: 3px;
		margin-left: 30px;
	}
	.views {
		display: flex;
		margin-left: auto;
	}
	.views button {
		width: 60px;
		height: 31px;
	}
	.chosen {
		background: #c6c6c6;
	}
	.zoom {
		display: flex;
		align-items: center;
		gap: 6px;
		margin-left: 8px;
	}
	.zoom input {
		width: 152px;
		height: 18px;
		appearance: none;
		background: linear-gradient(#222, #222) center / 100% 2px no-repeat;
	}
	.zoom input::-webkit-slider-thumb {
		width: 8px;
		height: 17px;
		appearance: none;
		background: #666;
	}
	.percent {
		width: 62px;
		text-align: right;
	}
	.watermark {
		position: absolute;
		right: 14px;
		bottom: 6px;
		color: rgb(110 110 110 / 70%);
		font-size: 20px;
	}
	.meter {
		position: absolute;
		top: 811px;
		left: 0;
	}
</style>
